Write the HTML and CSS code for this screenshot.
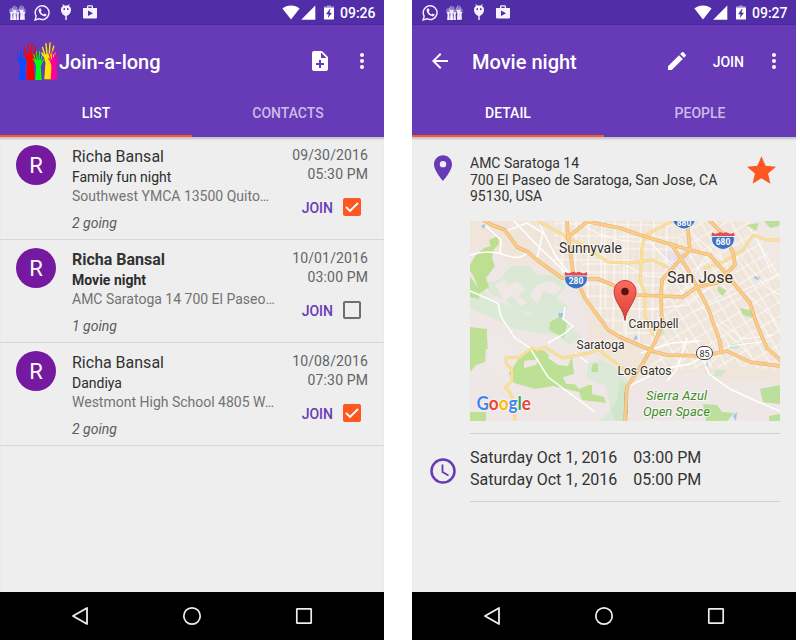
FILE: index.html
```html
<!DOCTYPE html>
<html lang="en">
<head>
<meta charset="utf-8">
<title>Join-a-long</title>
<link rel="stylesheet" href="styles.css">
</head>
<body>
<svg class="defs" aria-hidden="true">
  <symbol id="hand" viewBox="0 0 12 30">
    <path d="M2.600 30L3.600 16.500C2.600 14.500 2.500 12.500 2.900 10L8.900 10C9.400 12.500 9.300 14.500 8.300 16.500L9.200 30Z"/>
    <path d="M3.600 12L1.200 4.500M4.900 11L4 1.500M6.500 11L7.200 1M8 11.500L10.200 3.500M8 14.500L11.500 9M3.400 13L.7 9" fill="none" stroke="currentColor" stroke-width="1.150" stroke-linecap="round"/>
  </symbol>
  <symbol id="hands" viewBox="0 0 42 39">
    <use class="h1" href="#hand" x="-1" y="8" width="13" height="31"/>
    <use class="h2" href="#hand" x="6" y="1" width="15" height="38"/>
    <use class="h3" href="#hand" x="15" y="9" width="13" height="30"/>
    <use class="h4" href="#hand" x="24" y="0" width="15" height="39"/>
    <use class="h5" href="#hand" x="31" y="8" width="12" height="31"/>
  </symbol>
  <symbol id="phone" viewBox="0 0 18 18">
    <path d="M1.2 16.8L2.3 12.8A7.3 7.3 0 1 1 5.2 15.6Z" fill="none" stroke="currentColor" stroke-width="1.5"/>
    <path d="M6.3 4.6C5 5 4.6 6.4 5 7.8C5.8 10.400 7.900 12.500 10.800 13.100C12.200 13.300 13.300 12.500 13.400 11.200L11.200 10L10.100 11.200C8.700 10.600 7.700 9.500 7.100 8.300L8 7.200L7.200 4.800Z"/>
  </symbol>
  <symbol id="droid" viewBox="0 0 12 17">
    <path d="M1 5.500C1 3.800 2 2.600 3.200 2L2.200 .5L3 .2L4.200 1.600Q6 1.200 7.800 1.600L9 .2L9.800 .5L8.800 2C10 2.600 11 3.800 11 5.500C11.200 8.500 9 11.500 6 12.200C3 11.500 .8 8.500 1 5.500ZM3.500 4.300V6H5V4.300ZM7 4.300V6H8.500V4.300Z" fill-rule="evenodd"/>
    <path d="M5.300 12H6.700V16H5.300Z"/>
  </symbol>
  <symbol id="bag" viewBox="0 0 14 14">
    <path d="M0 3H4V1.500Q4 .2 5.300 .2H8.700Q10 .2 10 1.500V3H14V12.500Q14 13.600 12.900 13.600H1.100Q0 13.600 0 12.500ZM5.300 3H8.700V1.500H5.300ZM5 5.500V11L10 8.200Z" fill-rule="evenodd"/>
  </symbol>
  <symbol id="wifi" viewBox="0 0 18 15"><path d="M9 14.500L.4 3.600Q4 .5 9 .5T17.600 3.600Z"/></symbol>
  <symbol id="cell" viewBox="0 0 15 15"><path d="M14.300 .5V14.700H.2Z"/></symbol>
  <symbol id="battery" viewBox="0 0 10 15"><path d="M0 2.500H10V13.700Q10 14.600 9.100 14.600H.9Q0 14.600 0 13.700ZM5.800 4L2 9.200H4.500L4 13L8 7.800H5.500L6.500 4Z" fill-rule="evenodd"/><path d="M3 .5H7V1.500H10V2.500H0V1.500H3Z" opacity=".5"/></symbol>
  <symbol id="more" viewBox="0 0 4 16"><circle cx="2" cy="2" r="2"/><circle cx="2" cy="8" r="2"/><circle cx="2" cy="14" r="2"/></symbol>
  <symbol id="i-back" viewBox="0 0 24 24"><path d="M19 4L5 12L19 20Z" fill="none" stroke="currentColor" stroke-width="1.800" stroke-linejoin="round"/></symbol>
  <symbol id="i-home" viewBox="0 0 24 24"><circle cx="12" cy="12" r="8.200" fill="none" stroke="currentColor" stroke-width="1.700"/></symbol>
  <symbol id="i-recent" viewBox="0 0 24 24"><rect x="4.800" y="4.800" width="14.400" height="14.400" rx=".5" fill="none" stroke="currentColor" stroke-width="1.700"/></symbol>
</svg>

<main class="stage">
  <section class="phone">
    <div class="status">
      <svg class="s-hands"><use href="#hands"/></svg>
      <svg class="s-phone"><use href="#phone"/></svg>
      <svg class="s-droid"><use href="#droid"/></svg>
      <svg class="s-bag"><use href="#bag"/></svg>
      <span class="grow"></span>
      <svg class="s-wifi"><use href="#wifi"/></svg>
      <svg class="s-cell"><use href="#cell"/></svg>
      <svg class="s-batt"><use href="#battery"/></svg>
      <span class="clock">09:26</span>
    </div>
    <header class="toolbar">
      <svg class="logo"><use href="#hands"/></svg>
      <h1 class="brand">Join-a-long</h1>
      <span class="grow"></span>
      <svg class="add" viewBox="4 2 16 20"><path d="M14 2H6C4.900 2 4 2.900 4 4V20C4 21.100 4.900 22 6 22H18C19.100 22 20 21.100 20 20V8ZM16 16H13V19H11V16H8V14H11V11H13V14H16ZM13 9V3.500L18.500 9Z" fill-rule="evenodd"/></svg>
      <svg class="more"><use href="#more"/></svg>
    </header>
    <nav class="tabs"><a class="tab active">LIST</a><a class="tab">CONTACTS</a></nav>
    <div class="content">
      <article class="event">
        <div class="avatar">R</div>
        <div class="info"><div class="name">Richa Bansal</div><div class="what">Family fun night</div><div class="where">Southwest YMCA 13500 Quito…</div><div class="going">2 going</div></div>
        <div class="side"><div class="when">09/30/2016</div><div class="when">05:30 PM</div><div class="join"><span>JOIN</span><i class="box checked"><svg viewBox="0 0 18 18"><path d="M3 9L7 13L15 5"/></svg></i></div></div>
      </article>
      <article class="event unread">
        <div class="avatar">R</div>
        <div class="info"><div class="name">Richa Bansal</div><div class="what">Movie night</div><div class="where">AMC Saratoga 14 700 El Paseo…</div><div class="going">1 going</div></div>
        <div class="side"><div class="when">10/01/2016</div><div class="when">03:00 PM</div><div class="join"><span>JOIN</span><i class="box"></i></div></div>
      </article>
      <article class="event">
        <div class="avatar">R</div>
        <div class="info"><div class="name">Richa Bansal</div><div class="what">Dandiya</div><div class="where">Westmont High School 4805 W…</div><div class="going">2 going</div></div>
        <div class="side"><div class="when">10/08/2016</div><div class="when">07:30 PM</div><div class="join"><span>JOIN</span><i class="box checked"><svg viewBox="0 0 18 18"><path d="M3 9L7 13L15 5"/></svg></i></div></div>
      </article>
    </div>
    <footer class="navbar"><svg><use href="#i-back"/></svg><svg><use href="#i-home"/></svg><svg><use href="#i-recent"/></svg></footer>
  </section>

  <section class="phone">
    <div class="status">
      <svg class="s-phone first"><use href="#phone"/></svg>
      <svg class="s-hands second"><use href="#hands"/></svg>
      <svg class="s-droid"><use href="#droid"/></svg>
      <svg class="s-bag"><use href="#bag"/></svg>
      <span class="grow"></span>
      <svg class="s-wifi"><use href="#wifi"/></svg>
      <svg class="s-cell"><use href="#cell"/></svg>
      <svg class="s-batt"><use href="#battery"/></svg>
      <span class="clock">09:27</span>
    </div>
    <header class="toolbar">
      <svg class="arrow" viewBox="4 4 16 16"><path d="M20 11H7.830L13.420 5.410L12 4L4 12L12 20L13.410 18.590L7.830 13H20Z"/></svg>
      <h1 class="heading">Movie night</h1>
      <span class="grow"></span>
      <svg class="pencil" viewBox="3 3 18 18"><path d="M3 17.250V21H6.750L17.810 9.940L14.060 6.190ZM20.710 7.040C21.100 6.650 21.100 6.020 20.710 5.630L18.370 3.290C17.980 2.900 17.350 2.900 16.960 3.290L15.130 5.120L18.880 8.870Z"/></svg>
      <span class="action">JOIN</span>
      <svg class="more"><use href="#more"/></svg>
    </header>
    <nav class="tabs"><a class="tab active">DETAIL</a><a class="tab">PEOPLE</a></nav>
    <div class="content detail">
      <div class="place">
        <svg class="pin" viewBox="5 2 14 20"><path d="M12 2C8.130 2 5 5.130 5 9C5 14.250 12 22 12 22S19 14.250 19 9C19 5.130 15.870 2 12 2ZM12 11.500A2.500 2.500 0 1 1 12 6.500A2.500 2.500 0 0 1 12 11.500Z"/></svg>
        <address>AMC Saratoga 14<br>700 El Paseo de Saratoga, San Jose, CA<br>95130, USA</address>
        <svg class="star" viewBox="2 2 20 19"><path d="M12 17.270L18.180 21L16.540 13.970L22 9.240L14.810 8.630L12 2L9.190 8.630L2 9.240L7.460 13.970L5.820 21Z"/></svg>
      </div>
      <svg class="map" viewBox="0 0 310 200">
        <defs>
          <pattern id="g1" width="13" height="12" patternUnits="userSpaceOnUse" patternTransform="rotate(1)"><path d="M0 1H13M2 0V12" stroke="#fff" stroke-opacity=".8" stroke-width="1.200"/><path d="M8 0V12" stroke="#fff" stroke-opacity=".4" stroke-width=".6"/></pattern>
          <pattern id="g2" width="13" height="12" patternUnits="userSpaceOnUse" patternTransform="rotate(-31)"><path d="M0 1H13M2 0V12" stroke="#fff" stroke-opacity=".75" stroke-width="1.100"/><path d="M8 0V12" stroke="#fff" stroke-opacity=".4" stroke-width=".6"/></pattern>
          <linearGradient id="pg" x1="0" y1="0" x2="0" y2="1"><stop offset="0" stop-color="#fb6c5d"/><stop offset="1" stop-color="#dd4036"/></linearGradient>
        </defs>
        <rect width="310" height="200" fill="#efe5da"/>
        <path d="M0 30L14 24L35 40L60 44L92 58L104 65L113 83L118 108L115 118L125 134L152 147L161 163L190 153L230 150L255 162L285 158L310 165V200H0Z" fill="#efe7e6"/>
        <path d="M282 0H310V60L292 42L272 12Z" fill="#efe8e3"/>
        <path d="M193 30L207 28L220 38L211 48L198 46Z" fill="#e5e0e6"/>
        <path d="M84 0H202L218 40L196 56L193 104L184 130L150 115L120 82L104 62L84 45Z" fill="url(#g1)"/>
        <path d="M202 0H280L310 50V150L270 145L230 148L180 150L192 58L219 38Z" fill="url(#g2)"/>
        <path d="M41 45H60L68 54H92L96 66L86 78L98 85L92 98L104 108L92 118L76 106L65 101L60 91L45 89L36 79L20 73L14 62L29 59Z" fill="#dbe8d5"/>
        <path d="M0 57L12 66L22 78L34 83L51 90L68 99L90 95L104 110L112 116L100 124L85 114L65 112L45 108L20 96L0 88ZM118 142L132 139L145 145L158 160V200H129L141 189L136 165L116 158Z" fill="#dde9d7"/>
        <path d="M5 35L14 27L25 24L22 37L25 45L16 57L19 66L10 72L4 56L0 50V44ZM19 19L28 15L29 23L22 30Z" fill="#bddf91"/>
        <path d="M0 106L17 108V117L31 119L25 128H16L15 141L6 144L0 151ZM0 191H16V200H0Z" fill="#bee095"/>
        <path d="M62 127L75 130L83 140L102 137L104 153L93 156L96 163L122 164V173L134 176L136 182L112 179L109 171L83 165L65 168L44 162L39 152L48 139Z" fill="#bce094"/>
        <path d="M123 142L128 143V151H121ZM80 101L91 95L97 103L94 117L79 109ZM0 55L10 70L9 78L0 76ZM233 183L247 184L252 191L264 192L257 200H236ZM290 168L310 164V183L293 181ZM299 195L310 193V200H299ZM249 65L257 70L252 75L247 69ZM270 87L284 90L282 97L273 94ZM276 4L289 2L286 10ZM294 0H310L309 5L300 7Z" fill="#bddf9c"/>
        <path d="M150 159L158 164V200H145L141 188L147 180ZM186 110L193 108L195 113L187 117ZM245 149L256 149L252 156L244 155ZM260 123L269 122V127L260 128Z" fill="#d0e6ca"/>
        <path d="M25 64L34 58L38 65L46 60L55 68L48 75L57 81L51 86L42 75L34 79ZM67 63L82 60L92 67L84 74L73 70L68 83L60 75ZM17 116L27 106L36 113L44 135L35 154L25 157L19 145ZM78 137L83 130L92 137L101 137L98 145L88 144ZM54 140L69 138L66 144L54 147ZM101 158L110 160L119 158L119 164L109 168L104 162Z" fill="#f0e7e7"/>
        <g fill="#98c5ee"><path d="M11 5L15 3L14 8ZM88 92H94L93 96H89ZM154 171L158 175V194L154 190ZM163 119L166 114L168 118ZM234 144L238 142L237 147ZM284 55L290 56L289 59L285 58ZM263 195L267 191L266 200Z"/></g>
        <g fill="none" stroke="#fff" stroke-width="1.500">
          <path d="M0 70L28 82L31 96L45 117L60 127L78 156L98 171L125 191M44 0L65 22L95 51M0 34Q18 28 35 34T57 31M16 5L31 19L30 33M36 10L57 2L73 12L67 37M70 4L85 34L101 55M78 122L94 113L103 105L93 98L95 86M118 142L105 132M171 132L202 122L230 120M157 166L194 148L220 143L235 135M197 160L207 148L217 117M231 133L239 153L260 168L286 180L310 190"/>
          <path d="M238 145L258 125L300 120M249 99L273 118L304 114M276 72L301 95L310 113M285 13L302 53M225 90L276 68L310 53M107 1L129 13L149 19L181 22L211 52M112 43H154L176 55L216 57M135 7V86M154 5V110M176 15L205 51L239 95L282 136M224 14L252 39M244 24L205 82M261 47L218 84L168 89M271 36L296 66L310 74" stroke-width="1" stroke-opacity=".85"/>
        </g>
        <g fill="none" stroke-linecap="round" stroke-linejoin="round">
          <path d="M68 0L112 24L138 41L158 42L183 39L197 46M202 0L176 14L172 24L170 61L175 71V95L183 114M310 19H297L283 14L273 29L253 41L235 47M45 200L43 180L40 171L35 167L42 160L42 149L36 142V137L50 136L62 127L67 129L75 126L92 137L120 132L128 128L152 147L162 153" stroke="#ecd08c" stroke-width="2.800"/>
          <path d="M68 0L112 24L138 41L158 42L183 39L197 46M202 0L176 14L172 24L170 61L175 71V95L183 114M310 19H297L283 14L273 29L253 41L235 47M45 200L43 180L40 171L35 167L42 160L42 149L36 142V137L50 136L62 127L67 129L75 126L92 137L120 132L128 128L152 147L162 153" stroke="#fbe297" stroke-width="1.900"/>
          <path d="M15 0L22 4L35 9L47 26L58 31L67 39L92 57L128 58L143 64L158 73L167 74L213 76L227 66L247 62L257 52L265 44L263 31L251 11L240 0M120 1L150 7L170 14L203 24L220 29L240 34L257 54L280 82L287 104L297 127L310 139M97 0L98 14L103 51L115 77L138 109L150 116L185 131L197 134L233 135L257 130L280 141L310 145M97 17L118 0M217 0L220 29L207 42L192 59L191 74L192 104L185 121L173 142L157 166L155 200M202 24L217 47L227 66L238 87L250 121L251 129" stroke="#e9b06c" stroke-width="3.600"/>
          <path d="M15 0L22 4L35 9L47 26L58 31L67 39L92 57L128 58L143 64L158 73L167 74L213 76L227 66L247 62L257 52L265 44L263 31L251 11L240 0M120 1L150 7L170 14L203 24L220 29L240 34L257 54L280 82L287 104L297 127L310 139M97 0L98 14L103 51L115 77L138 109L150 116L185 131L197 134L233 135L257 130L280 141L310 145M97 17L118 0M217 0L220 29L207 42L192 59L191 74L192 104L185 121L173 142L157 166L155 200M202 24L217 47L227 66L238 87L250 121L251 129" stroke="#fccd88" stroke-width="2.400"/>
        </g>
        <g class="shield">
          <g id="sh"><path d="M95 55H117C119 62 113 67 106 68C99 67 93 62 95 55Z" fill="#3b72c4" stroke="#fff" stroke-width=".7"/><path d="M95 51Q98 53 101 51.500Q104 50 106 52Q108 50 111 51.500Q114 53 117 51L117.500 54.500H94.500Z" fill="#df4d55"/></g>
          <use href="#sh" x="147" y="-39.500"/><use href="#sh" x="108" y="-60"/>
          <text x="106" y="63.300">280</text><text x="253" y="23.800">680</text><text x="214" y="4.500">880</text>
        </g>
        <rect x="226.500" y="125.500" width="16" height="13" rx="6.500" fill="#fff" stroke="#444"/>
        <text class="route" x="234.500" y="135.500">85</text>
        <g class="town">
          <text x="89" y="32" font-size="14" textLength="63" lengthAdjust="spacingAndGlyphs">Sunnyvale</text>
          <text x="197" y="61.500" font-size="16" textLength="66" lengthAdjust="spacingAndGlyphs">San Jose</text>
          <text x="158.500" y="107" font-size="12" textLength="50">Campbell</text>
          <text x="106.500" y="128" font-size="12" textLength="48">Saratoga</text>
          <text x="147.500" y="153.500" font-size="12" textLength="54">Los Gatos</text>
        </g>
        <g class="park"><text x="176" y="179" textLength="61">Sierra Azul</text><text x="173" y="195" textLength="67">Open Space</text></g>
        <path d="M155 99.500C154 88 144 81 144 70.500C144 64 149 59.500 155 59.500S166 64 166 70.500C166 81 156 88 155 99.500Z" fill="url(#pg)" stroke="#a62d26" stroke-width=".8"/>
        <circle cx="155" cy="70.500" r="3.800" fill="#5c1211"/>
        <text class="google" x="6.500" y="188.500" textLength="54.500" lengthAdjust="spacingAndGlyphs"><tspan fill="#4285f4">G</tspan><tspan fill="#ea4335">o</tspan><tspan fill="#fbbc05">o</tspan><tspan fill="#4285f4">g</tspan><tspan fill="#34a853">l</tspan><tspan fill="#ea4335">e</tspan></text>
      </svg>
      <div class="times">
        <svg class="clockface" viewBox="0 0 26 26"><circle cx="13" cy="13" r="11.500" stroke-width="2.500"/><path d="M12.500 6.500V14L18.500 17.500" stroke-width="1.800"/></svg>
        <div class="slot"><span>Saturday Oct 1, 2016</span><span>03:00 PM</span><span>Saturday Oct 1, 2016</span><span>05:00 PM</span></div>
      </div>
    </div>
    <footer class="navbar"><svg><use href="#i-back"/></svg><svg><use href="#i-home"/></svg><svg><use href="#i-recent"/></svg></footer>
  </section>
</main>
</body>
</html>
```
FILE: styles.css
```css
* { box-sizing: border-box; }
body { margin: 0; background: #fff; font-family: Roboto, "Liberation Sans", sans-serif; overflow: hidden; }
svg { display: block; flex: none; fill: currentColor; }
.defs { position: absolute; width: 0; height: 0; }
.stage { display: flex; gap: 28px; width: 800px; height: 640px; }
.phone { width: 384px; height: 640px; display: flex; flex-direction: column; background: #eee; flex: none; }
.grow { flex: 1; }

.status { height: 25px; display: flex; align-items: center; background: #512da8; color: #fff; padding: 0 8px 0 9px; border-bottom: 1px solid #4a2a98; }
.s-hands { width: 17px; height: 15px; margin-right: 8px; }
.s-phone { width: 17px; height: 17px; margin-right: 9px; }
.s-phone.first { margin-left: 1px; margin-right: 7px; }
.s-hands.second { margin-right: 10px; }
.s-phone, .s-hands, .s-droid, .s-bag { color: #f6f2ff; }
.s-droid { width: 12px; height: 17px; margin: 1px 11px 0 0; }
.s-bag { width: 14px; height: 14px; margin-right: 4px; }
.s-wifi { width: 18px; height: 15px; margin-right: 1px; }
.s-cell { width: 15px; height: 15px; margin-right: 8px; }
.s-batt { width: 10px; height: 15px; margin-right: 6px; }
.clock { font-size: 14px; font-weight: 500; line-height: 24px; padding-top: 2px; width: 36px; white-space: nowrap; }

.toolbar { height: 64px; padding: 9px 20px 0 17px; display: flex; align-items: center; background: #673ab7; color: #fff; }
.logo { width: 42px; height: 39px; margin-top: -2px; }
.logo { --a: #0a4cff; --b: #f00; --c: #0f1; --d: #ffe600; --e: #ff009c; }
.h1 { color: var(--a, inherit); }
.h2 { color: var(--b, inherit); }
.h3 { color: var(--c, inherit); }
.h4 { color: var(--d, inherit); }
.h5 { color: var(--e, inherit); }
h1 { margin: 0; font-size: 20px; font-weight: 500; line-height: 24px; }
.brand { letter-spacing: -.05px; }
.add { width: 16px; height: 20px; margin: -1px 32px 0 0; }
.more { width: 4px; height: 16px; margin-top: -1px; }
.arrow { width: 16px; height: 16px; margin: -1px 24px 0 3px; }
.pencil { width: 18px; height: 18px; margin: -1px 27px 0 0; }
.action { font-size: 14px; font-weight: 500; margin: 0 28px 0 0; }

.tabs { height: 48px; display: flex; background: #673ab7; color: #fff; }
.tab { flex: 1; text-align: center; font-size: 14px; font-weight: 500; line-height: 49px; color: #ccbce6; border-bottom: 2px solid transparent; }
.tab.active { color: #fff; border-color: #ff5722; }

.content { flex: 1; box-shadow: inset 0 3px 2px -1px #bfc4c4; }
.event { height: 103px; padding: 9px 16px 0; display: flex; border-bottom: 1px solid #d8d8d8; }
.avatar { width: 40px; height: 40px; margin: -1px 16px 0 0; border-radius: 50%; background: #7419a0; color: #fff; font-size: 22px; line-height: 41px; text-align: center; }
.info { flex: 1; white-space: nowrap; font-size: 14px; color: #737373; }
.name { font-size: 16px; line-height: 20px; color: #333; padding-top: 1px; }
.what { line-height: 19px; color: #2c2c2c; padding-top: 1px; }
.where { line-height: 20px; margin-top: -1px; }
.going { line-height: 19px; margin-top: 8px; font-style: italic; color: #5c5c5c; }
.unread .name, .unread .what { font-weight: 700; }
.side { width: 80px; text-align: right; font-size: 14px; line-height: 19px; color: #656565; }
.when { letter-spacing: .15px; margin-right: -.15px; }
.join { display: flex; justify-content: flex-end; align-items: center; margin: 14px 7px 0 0; height: 18px; color: #673ab7; font-weight: 500; }
.join span { margin-right: 10px; padding-top: 2px; }
.box { width: 18px; height: 18px; border: 2px solid #6e6e6e; border-radius: 2px; }
.box.checked { border: 0; background: #ff5722; }
.box svg { width: 18px; height: 18px; fill: none; stroke: #fff; stroke-width: 1.9; }

.detail { padding: 17px 16px 0 22px; color: #333; }
.place { display: flex; height: 67px; }
.pin { width: 18px; height: 26px; margin: 1px 18px 0 0; color: #673ab7; }
address { flex: 1; font-style: normal; font-size: 14px; line-height: 16.5px; white-space: nowrap; padding-top: 1px; }
.star { width: 29px; height: 28px; margin: 2px 4px 0 0; color: #ff5722; }
.map { width: 310px; height: 200px; margin-left: 36px; overflow: hidden; }
.shield text { font-size: 8.5px; font-weight: 700; fill: #fff; text-anchor: middle; }
.route { font-size: 9px; fill: #333; text-anchor: middle; }
.town text { fill: #332f2b; stroke: #fff; stroke-opacity: .65; stroke-width: 2px; paint-order: stroke; }
.park { font-size: 13px; font-style: italic; fill: #3f8c28; stroke: #fff; stroke-opacity: .65; stroke-width: 2px; paint-order: stroke; }
.google { font-family: Lato, Roboto, sans-serif; font-size: 18px; font-weight: 700; stroke: #fff; stroke-opacity: .8; stroke-width: 1.5px; paint-order: stroke; }
.times { display: flex; margin: 12px 0 0 -4px; height: 69px; }
.clockface { width: 26px; height: 26px; margin: 25px 14px 0 0; fill: none; stroke: #673ab7; }
.slot { flex: 1; display: grid; grid-template-columns: auto 1fr; column-gap: 16px; align-content: start; padding-top: 13px; font-size: 16px; line-height: 21.500px; border-top: 1px solid #d0d0d0; border-bottom: 1px solid #d0d0d0; white-space: nowrap; }

.navbar { height: 48px; padding: 0 68px; display: flex; justify-content: space-between; align-items: center; background: #000; color: #eee; }
.navbar svg { width: 24px; height: 24px; }
```
